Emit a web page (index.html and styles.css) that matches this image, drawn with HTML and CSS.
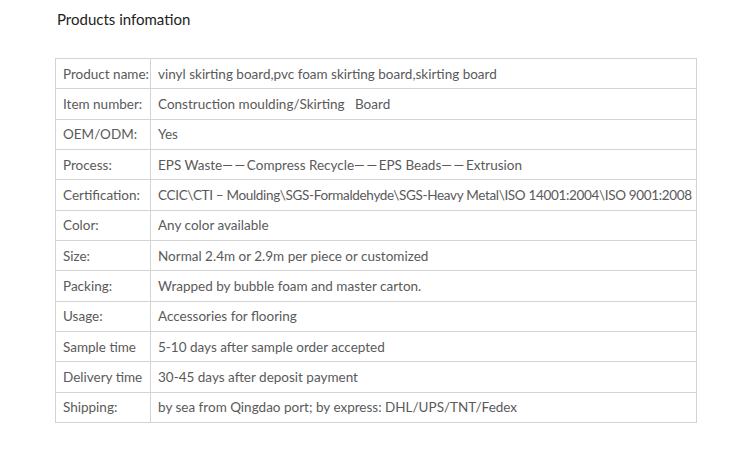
FILE: index.html
```html
<!DOCTYPE html>
<html>
<head>
<meta charset="utf-8">
<link rel="stylesheet" href="styles.css">
</head>
<body>
<div class="page">
  <h2 class="title">Products infomation</h2>
  <table class="info">
    <colgroup><col class="col-label"><col class="col-value"></colgroup>
    <tr><td>Product name:</td><td>vinyl skirting board,pvc foam skirting board,skirting board</td></tr>
    <tr><td>Item number:</td><td>Construction moulding/Skirting&nbsp;&nbsp; Board</td></tr>
    <tr><td>OEM/ODM:</td><td>Yes</td></tr>
    <tr><td>Process:</td><td>EPS Waste<span class="dash">——</span>Compress Recycle<span class="dash">——</span>EPS Beads<span class="dash">——</span>Extrusion</td></tr>
    <tr><td>Certification:</td><td><span class="tight">CCIC\CTI – Moulding\SGS-Formaldehyde\SGS-Heavy Metal\ISO 14001:2004\ISO 9001:2008</span></td></tr>
    <tr><td>Color:</td><td>Any color available</td></tr>
    <tr><td>Size:</td><td>Normal 2.4m or 2.9m per piece or customized</td></tr>
    <tr><td>Packing:</td><td>Wrapped by bubble foam and master carton.</td></tr>
    <tr><td>Usage:</td><td>Accessories for flooring</td></tr>
    <tr><td>Sample time</td><td>5-10 days after sample order accepted</td></tr>
    <tr><td>Delivery time</td><td>30-45 days after deposit payment</td></tr>
    <tr><td>Shipping:</td><td>by sea from Qingdao port; by express: DHL/UPS/TNT/Fedex</td></tr>
  </table>
</div>
</body>
</html>
```
FILE: styles.css
```css
html, body {
  margin: 0;
  padding: 0;
  background: #ffffff;
}
.page {
  padding: 9px 0 0 55px;
  font-family: Lato, "Liberation Sans", sans-serif;
}
.title {
  margin: 0 0 29px 2px;
  font-size: 15px;
  font-weight: normal;
  color: #222222;
  line-height: 20px;
}
.info {
  border-collapse: collapse;
  table-layout: fixed;
  width: 642px;
  font-size: 13.5px;
  color: #5a5a5a;
}
.col-label {
  width: 95px;
}
.info td {
  border: 1px solid #d3d3d3;
  height: 29.33px;
  padding: 0 0 0 7px;
  white-space: nowrap;
  overflow: visible;
  vertical-align: middle;
}
.dash {
  letter-spacing: 1.6px;
}
.tight {
  letter-spacing: -0.33px;
}
```
